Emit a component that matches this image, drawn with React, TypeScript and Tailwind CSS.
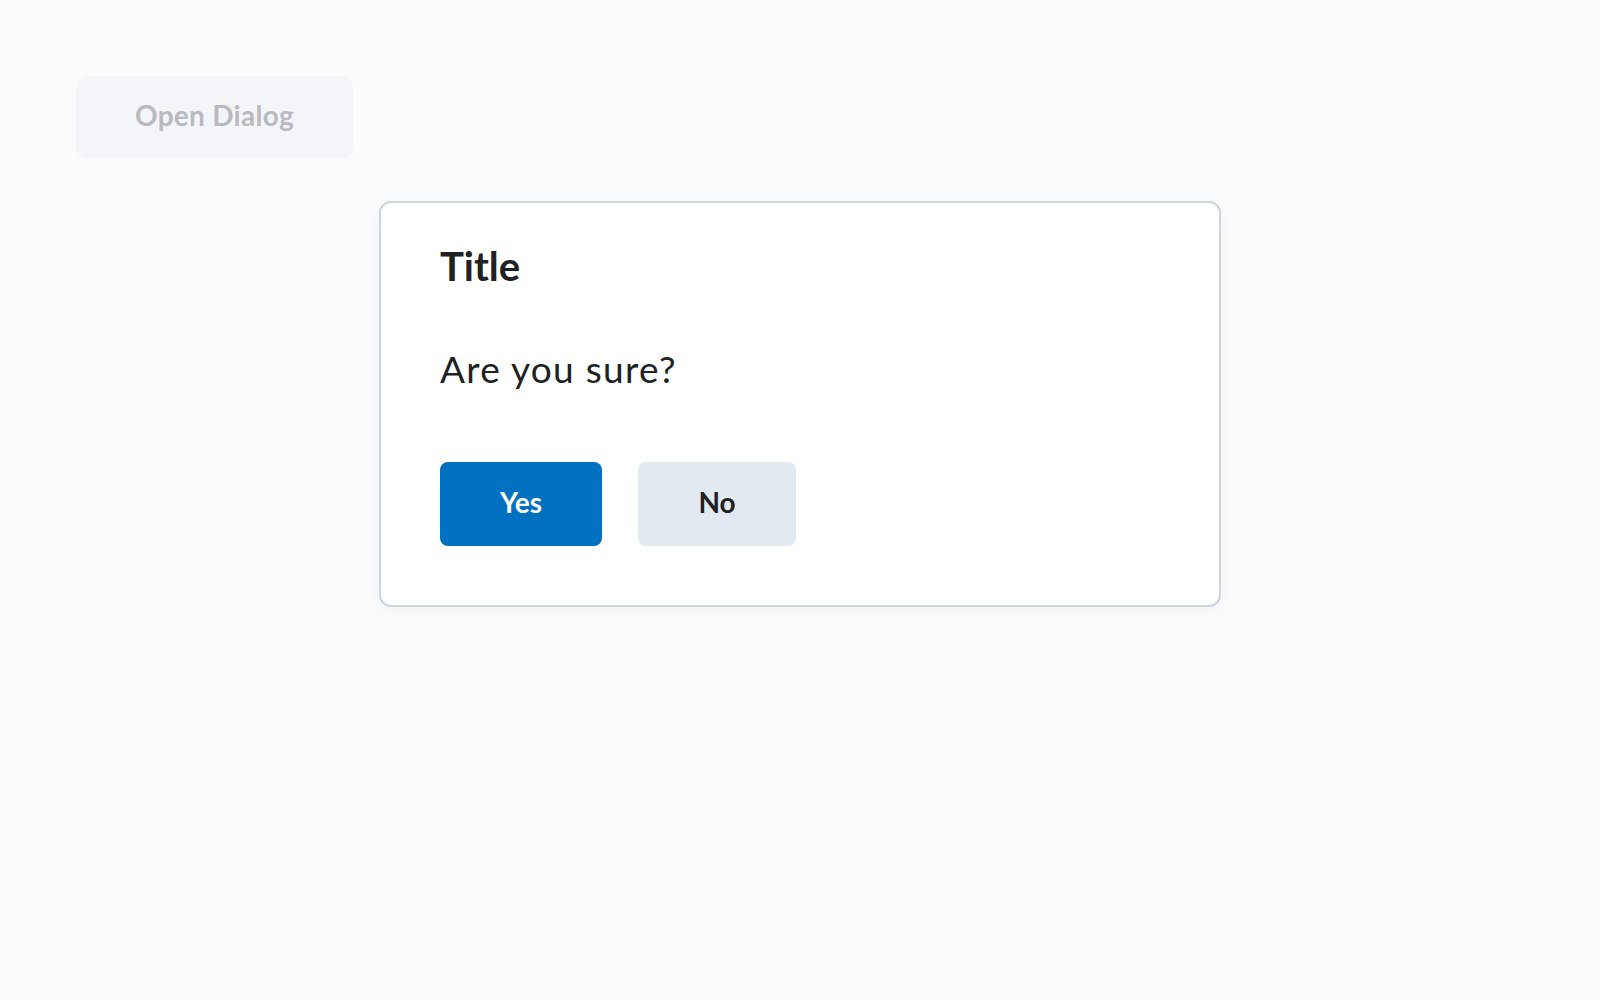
export default function App() {
  return (
    <div
      className="min-h-screen bg-[#fafbfd] p-[76px] text-[#202122]"
      style={{ fontFamily: "Lato, 'Noto Sans', sans-serif" }}
    >
      <button className="h-[83px] w-[277px] rounded-[12px] bg-[#f4f5f9] pb-[5px] text-[28px] font-bold tracking-[0.01em] text-[#b9babe]">
        Open Dialog
      </button>
      <div className="mx-auto mt-[42px] w-[842px] rounded-[12px] border-2 border-[#cdd5dc] bg-white px-[59px] pt-[39px] pb-[59px] shadow-[0_4px_16px_rgba(0,0,0,0.03)]">
        <h2 className="text-[40px] font-bold leading-[1.2]">Title</h2>
        <p className="mt-[57px] text-[37px] leading-[1.2] tracking-[0.035em]">Are you sure?</p>
        <div className="mt-[71px] flex gap-[36px]">
          <button className="h-[84px] w-[162px] rounded-[8px] bg-[#0070c0] pb-[5px] text-[28px] font-bold text-white">
            Yes
          </button>
          <button className="h-[84px] w-[158px] rounded-[8px] bg-[#e3e9f1] pb-[5px] text-[28px] font-bold text-[#202122]">
            No
          </button>
        </div>
      </div>
    </div>
  );
}
